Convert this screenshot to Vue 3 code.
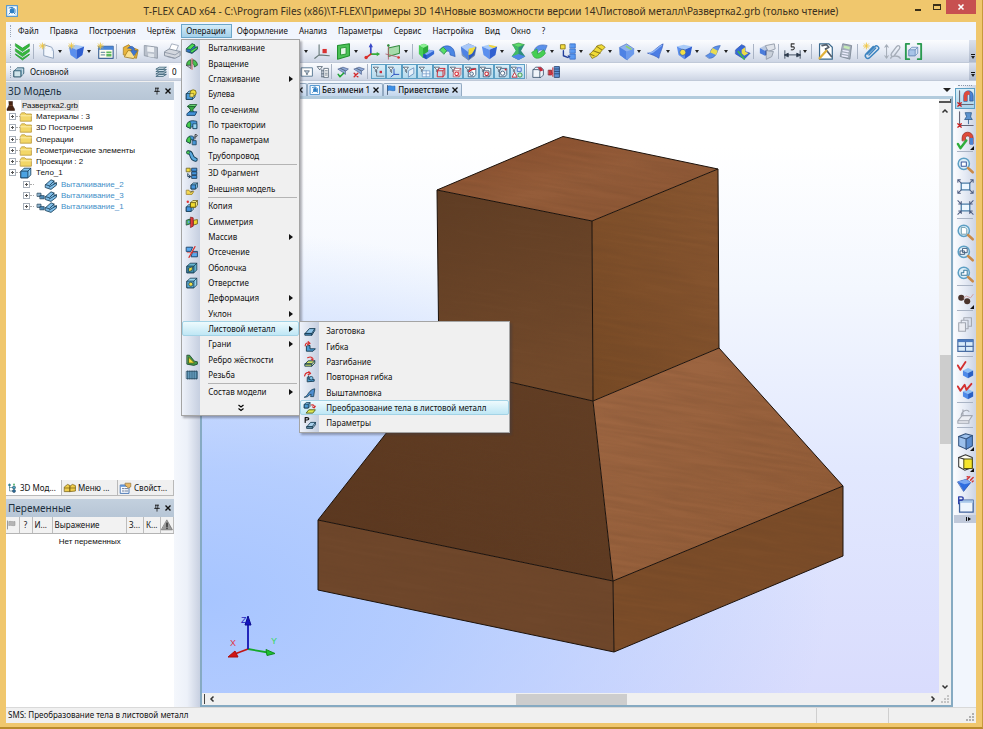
<script setup>
import { ref } from 'vue'

/* ---------- icon drawing helpers (20 x 20 grid) ---------- */
const p = (d, f = 'none', s = 'none', w = 1) =>
  `<path d="${d}" fill="${f}" stroke="${s}" stroke-width="${w}" stroke-linejoin="round" stroke-linecap="round"/>`
const c = (x, y, r, f = 'none', s = 'none', w = 1) =>
  `<circle cx="${x}" cy="${y}" r="${r}" fill="${f}" stroke="${s}" stroke-width="${w}"/>`
const cube = (x, y, s, top, left, right, line = 'none', w = 1) => {
  const h = s / 2, q = s / 4
  return p(`M${x} ${y + q}L${x + h} ${y}L${x + s} ${y + q}L${x + h} ${y + h}Z`, top, line, w) +
    p(`M${x} ${y + q}L${x + h} ${y + h}V${y + s}L${x} ${y + s - q}Z`, left, line, w) +
    p(`M${x + s} ${y + q}L${x + h} ${y + h}V${y + s}L${x + s} ${y + s - q}Z`, right, line, w)
}
const box = (x, y, s, f, f2, line = '#12384f', w = 1.3) =>
  p(`M${x} ${y + s * 0.3}L${x + s * 0.3} ${y}H${x + s}V${y + s * 0.7}L${x + s * 0.7} ${y + s}H${x}Z`, f2, line, w) +
  p(`M${x} ${y + s * 0.3}H${x + s * 0.7}V${y + s}H${x}Z`, f, line, w) +
  p(`M${x + s * 0.7} ${y + s * 0.3}L${x + s} ${y}`, 'none', line, w)
const funnel = p('M1 2h8l-3 4v5l-2-2V6z', '#fff', '#3a4a5c', 1.2)
const spark = p('M4 0v7M0.5 3.5h7M1.5 1l5 5M6.5 1l-5 5', 'none', '#f0c43a', 1)
const lens = c(8, 8, 6.6, '#dceffa', '#5d9fc4', 1.8) + p('M13 13l5.5 5', 'none', '#c98a4a', 3)
const bcube = p('M1 4l8-2 10 2-9 4z', '#a9cbf8') + p('M1 4l9 4v11l-7-5z', '#5b8fee') + p('M19 4l-9 4v11l7-5z', '#2f5fd0')

const icons = {
  app: p('M1 1h18v18H1z', '#f6fbff', '#5a9bd0', 2) + c(10, 10, 4, '#2f7fc4') + p('M10 4v6l-5 5M10 10l5 5M5 5l5-1 5 3v6', 'none', '#2f7fc4', 1.6),
  chev: p('M2 1l8 5 8-5v3l-8 6-8-6zM2 7l8 5 8-5v3l-8 6-8-6zM2 13l8 5 8-5v1l-8 6-8-6z', '#35b83c', '#1f9a2c', .8),
  newdoc: p('M6 2l9 3 2 4v9L6 15z', '#f3f7fd', '#8397b4', 1) + p('M15 5v4h2z', '#b9c9e0') + spark,
  cube: bcube + spark,
  win: p('M2 4h17v14H2z', '#fffdf0', '#44699b', 1.4) + p('M2 4h17v4H2z', '#4a86d8') + p('M5 11h4M5 14h4', 'none', '#79a', 1.5) + p('M11 10h6v2h-6zM11 13h6v3h-6z', '#5cb85c') + spark,
  open: p('M2 5l6-3 3 3 8 3-2 10L2 14z', '#e9b43a', '#a9801f') + p('M3 16l4-7h11l-4 9z', '#fbe08c', '#a9801f') + p('M7 6c3-4 8-2 8 3h3l-4 6-4-6h2c0-2-2-3-5-3z', '#3f76d0', '#2a55a6', .6),
  save: p('M2 3l15 2v13L2 15z', '#b9c0cb', '#8a93a1') + p('M5 4l8 1v6l-8-1z', '#eef1f5') + p('M6 12l7 1v4l-7-1z', '#dfe4ea'),
  print: p('M6 8l3-7 8 2-3 7z', '#fff', '#98a3b3') + p('M1 10l5-3 13 3v5l-6 3-12-3z', '#d3d7de', '#808a98') + p('M1 11l12 3 6-4M4 16l8 2', 'none', '#8f97a7'),
  axR: p('M6 2v12M6 14l12 1M6 14l-5 4', 'none', '#677', 1.3) + p('M10 7h5v5h-5z', '#d93131'),
  plate: p('M3 3l14-2v14L3 19z', '#4cc257', '#1f8f2c', 1.2) + p('M7 6l6-1v8l-6 1z', '#e4f5e6', '#1f8f2c', 1),
  axes: p('M8 13V3', 'none', '#3949c8', 2) + p('M8 0l2.5 5h-5z', '#3949c8') + p('M8 13h8', 'none', '#33ad3d', 2) + p('M19 13l-4-2.5v5z', '#33ad3d') + p('M8 13l-5 4', 'none', '#d9302c', 2) + c(2.5, 17, 2, '#d9302c'),
  plane: p('M4 6l13-3v9L4 16z', '#a7dbab', '#358c41', 1.2) + p('M4 2v17M1 13l16 4', 'none', '#b0606a', 1) + c(16, 17, 1.5, '#d33') + c(4, 3, 1.5, '#2a9136'),
  ext: p('M7 12l6-4 6 1v4l-9 6-4-2z', '#3268d4') + p('M6 12l7-4 6 1-9 5z', '#86aef5') + p('M1 3l6-2 5 2v7l-6 4z', '#2aa83a') + p('M1 3l6-2 5 2-6 3z', '#8cf094') + p('M1 3l5 3v12l-5-5z', '#49cf56') + p('M6 13l4 1v5l-4-2z', '#2453b8'),
  bend: p('M1 8C5 1 16 2 18 10l1 6-6-2C13 9 10 8 6 12z', '#4a86e4', '#2f5fb8', .8) + p('M1 8l4-3 4 4-3 4z', '#58de65', '#1f9a2c', .8),
  round: p('M2 5l8-4 9 4-2 10-7 5-7-5z', '#f2dd3e', '#4a6fc0', .8) + p('M1 4l9 4v12l-7-6z', '#4f83e4') + p('M1 4l9-3 9 3-5 2C10 6 9 8 10 11z', '#a9c8f8') + p('M19 4l-2 10-7 6v-6c5 0 6-5 9-10z', '#2d59c0'),
  cubeY: bcube + p('M9 2l10 2-5 2-4-2z', '#f4d93a'),
  loft: p('M3 2l7-2 7 2-7 3z', '#5fdc6c', '#1f8a2d', .7) + p('M3 2l7 3 7-3-4 7 5 7-8 4-8-4 5-7z', '#2d8d7c') + p('M3 2l4 7-5 7 8 3V5z', '#41bb65') + p('M2 16l8-3 8 3-8 4z', '#4f86e8'),
  rev: p('M4 8C6 3 12 1 19 3l-3 7C12 7 8 8 8 12z', '#5a90ea', '#3a66b8', .7) + p('M1 11l6-4 1 6 7-5 2 4c-4 6-11 8-14 4z', '#44cf52', '#2a9a3a', .7),
  array: p('M1 2h5v5H1z', '#f3dc3f', '#877412') + p('M4 9v6l5 2', 'none', '#233f9a', 1.6) + p('M10 18l-1-4 4 2z', '#233f9a') + p('M12 1h6v5h-6zM12 7h6v5h-6zM12 13h6v6h-6z', '#5a9af2', '#2a62c0', .8),
  copy: p('M1 13l5-5 4-5 5-1 4 3-4 4-5 6-6 3z', '#f0db36', '#8c7a1c') + p('M5 9l8 3M9 4l6 4M1 13l5 2', 'none', '#8c7a1c', 1.2),
  cham: p('M2 5l8-4 9 6-6 4-2 9-8-6z', '#8fb2ee', '#4a72c2', .7) + p('M2 5l8 5v10l-8-6z', '#4d82e4') + p('M10 10l9-3v6l-8 7z', '#6b9aec') + p('M10 4l5 3', 'none', '#8ed06f', 2),
  wing: p('M1 12C8 12 9 6 19 1c-1 7-4 10-5 17-4-3-8-4-13-6z', '#4c7de4', '#3358b6', .7) + p('M3 12c7-1 8-6 14-9', 'none', '#8fb4f5', 1.4),
  hole: bcube + c(8, 11, 3.6, '#f3df45', '#3a61b0', 1),
  sheet: p('M1 15l5-3c1-6 4-8 12-9l-3 6c-2 6-5 9-10 9z', '#5b90e8', '#3a65b6', .7) + p('M6 11l7 3 2-5-6-3z', '#e9dc52'),
  shell: p('M2 8l7-6 4 2v6l6 2-7 7-10-6z', '#3768d6', '#2a50ab', .8) + p('M9 8l4-3v5l4 2-5 3-3-3z', '#ecdc48') + p('M5 10l4 5 3 4', 'none', '#3dbb4a', 1.8),
  multi: cube(1, 3, 12, '#b8c7df', '#4a7cdb', '#2d57b8') + p('M8 3l10-2 1 6-8 3z', '#dfe3ea', '#8d96a4') + p('M9 9l8 1-2 6-6 3z', '#c9d0da', '#8d96a4'),
  dim: p('M1 9v9M19 9v9M1 14h18M1 14l4-2v4zM19 14l-4-2v4z', '#2c3a4c', '#2c3a4c', 1) + p('M12 1H8.500V4.500h2.500c2 .5 1.500 4-2.500 3.500', 'none', '#333', 1.3),
  tools: p('M3 1h11l4 4v14H3z', '#fff', '#39688c', 1.4) + p('M6 3l5-1 3 3-4 2M10 7l7 9', 'none', '#55606d', 2) + p('M3 18l8-9', 'none', '#e0b13b', 2.6),
  calc: p('M6 1l10 2-2 16L3 16z', '#a3adbb', '#7b8593') + p('M7 3l7 1.500-.5 3-7-1.500z', '#c5eab6') + p('M6 9l6 1M5.500 12l6 1M5 15l6 1', 'none', '#eef', 1.6),
  clip: p('M5 13l9-9c2-2 6 1 4 3.500L8 17c-3 3-7-1-4.500-4L12 4M7 14l8-8', 'none', '#3d84c0', 1.7) + spark,
  clip2: p('M3 3v14M1 5l2-3 2 3M1 15l2 3 2-3', 'none', '#a5adb8', 1.2) + p('M9 12l6-8c2-2 5 0 3 3l-6 8c-2 2-5 0-3-3zM8 18c0-3 9-4 11 0', 'none', '#a5adb8', 1.6),
  brak: p('M5 1H1v18h4M15 1h4v18h-4', 'none', '#2a9a50', 2.2) + box(5, 5, 10, '#a8c4e8', '#d6e4f5', '#6d8fbc', 1),

  layer: p('M2 8l5-5h11v9l-5 6H2z', '#7ba9c0', '#2c5468', 1.3) + p('M2 8h11v10H2z', '#cfe3ea', '#2c5468', 1.3) + p('M5 5h11v9', 'none', '#fff', 1),
  levels: p('M2 5l5-3h12l-5 3zM2 9l5-3h12l-5 3zM2 13l5-3h12l-5 3zM2 17l5-3h12l-5 3z', '#dceaf2', '#2d566b', 1.3),
  fbox: p('M1 3h18v14H1z', '#fff', '#5b7a94', 1.6) + p('M6 8h8l-3 4v2h-2v-2z', '#bcd', '#345'),
  ftree: p('M1 1h8L5 6z', '#fff', '#456', 1.3) + p('M8 8h3M8 13h3M8 18h3M8 6v12', 'none', '#456', 1.2) + p('M12 4h7v15h-7zM14 8h3M14 12h3M14 15h3', '#fff', '#456', 1.2),
  fok: p('M2 5l8-3 9 3-5 4v5l-5-4z', '#8fa9d8', '#445a88', 1.1) + p('M2 14l3 4 6-6', 'none', '#1fa433', 2.6) + p('M6 4l8 4', 'none', '#456', 1.3),
  fno: p('M2 5l8-3 9 3-5 4v5l-5-4z', '#8fa9d8', '#445a88', 1.1) + p('M2 12l6 6M8 12l-6 6', 'none', '#d4282a', 2.4) + p('M6 4l8 4', 'none', '#456', 1.3),
  f0: funnel + p('M6 8v9h12', 'none', '#567', 1.2) + p('M11 8h4v4h-4z', '#cc2d3a'),
  f1: funnel + p('M10 5v9h8M10 14l-5 4', 'none', '#2a4fc0', 1.6),
  f2: funnel + p('M9 18V8l9-5v9z', '#e8f1fa', '#5883b5', 1.2),
  f3: funnel + p('M6 8h12v10H6zM12 8v10M6 13h12', '#f4f9ff', '#6d95c4', 1.2),
  f4: funnel + p('M6 8l3-4h9v10l-3 4H6zM6 8h9v10M15 8l3-4', 'none', '#cf2a35', 1.6),
  f5: funnel + p('M6 8l3-4h9v10l-3 4H6zM6 8h9v10M15 8l3-4', '#fff', '#b04b55', 1.2) + c(11, 13, 3, 'none', '#d6222e', 1.8),
  f6: funnel + p('M6 8l3-4h9v10l-3 4H6z', '#fff', '#3b5878', 1.4) + p('M7 9l4-3 6-1', 'none', '#d6222e', 2.4) + c(11, 13, 3, '#e7eef6', '#3b5878', 1.4),
  f7: funnel + p('M6 8l3-4h9v10l-3 4H6zM6 8h9v10', '#fff', '#3b5878', 1.4) + c(11, 13, 3, '#fff', '#c22834', 1.8),
  f8: funnel + p('M6 8l3-4h9v10l-3 4H6z', '#dbe7f2', '#3b5878', 1.4) + c(11, 12, 3.500, '#fff', '#3b5878', 1.4) + c(16, 6, 1.6, '#d6222e'),
  f9: funnel + p('M2 18l4-7 4 7z', '#fff', '#c22834', 1.5) + p('M11 3h6v6h-6z', '#dbe7ff', '#3a62c4', 1.4) + c(15, 15, 3.500, '#d7f3da', '#248b38', 1.4),
  g0: p('M2 6l4-4h9l4 4v9l-4 4H2z', '#f0f4fa', '#3c536e', 1.4) + p('M9 2h6l4 5-5 2z', '#c42a3c') + p('M2 6h9l2 3v10', 'none', '#3c536e', 1.4),
  g1: p('M11 1h8v18h-8zM11 5h8M11 9h8M11 13h8', '#5f94d8', '#23406e', 1.4) + p('M1 7h5v8H1z', '#cf3742', '#7c1a22', 1.2) + p('M8 3v14M8 11l-3 3', 'none', '#cf3742', 1.8),

  folder: p('M1 5l2-2h5l2 2h9v12H1z', '#f3d768', '#b08c28', 1.2) + p('M1 8h18', 'none', '#fff3b8', 1.3),
  body: box(2, 2, 16, '#4ba3e2', '#86c8f2', '#173e5c', 1.4),
  mext: p('M1 11l9-8 5 2v4l4-1v4l-9 7-9-3z', '#2f6fc0', '#123d56', 1.3) + p('M1 11l9-8 5 2-7 7zM7 15l12-7v3l-9 7z', '#4fdc55', '#146224', 1),
  text: p('M1 11l9-8 5 2v4l4-1v4l-9 7-9-3z', '#7fbde8', '#183e58', 1.4) + p('M8 12l7-7M7 15l12-7M1 11l6 2', 'none', '#183e58', 1.4),
  link: p('M1 3h9v8H1z', '#8db4d0', '#1d3f58', 1.8) + p('M8 9h10v8H8z', '#4f8cb8', '#1d3f58', 1.8),
  mrev: p('M1 12c0-6 3-8 7-9v9zM12 3c4 1 7 4 7 9l-5 3c0-3-1-4-2-5z', '#49c24e', '#23502c', 1.3) + p('M10 1v18', 'none', '#cf3a3a', 1.4) + p('M1 12h7v5z', '#b7c5cf', '#333', 1),
  mbool: box(1, 5, 14, '#4b9ad8', '#86c8f2') + c(12, 8, 5, '#f2dd3a', '#6d5f10', 1.3) + p('M7 9h6v6H7z', '#f2e36a', '#6d5f10', 1),
  mloft: p('M3 4l3-3h12l-3 4z', '#6fe27a', '#14532a', 1.4) + p('M3 4l5 6-5 6h12l-4-6 4-5z', '#34a843', '#14532a', 1.4) + p('M2 16l3-3h13l-3 6H2z', '#4392d8', '#123d66', 1.4),
  mtraj: p('M1 12C2 4 8 1 18 4v12h-6c0-5-3-5-4-1z', '#4795d6', '#123d56', 1.4) + p('M1 12c0-4 2-7 5-8l2 4-1 7z', '#47ce4e', '#14532a', 1.2) + p('M12 8h6v8h-6z', '#9bd6f2', '#123d56', 1.2),
  mpar: p('M1 12C2 4 8 1 13 5v5h-3c0-3-2-1-3 5z', '#4795d6', '#123d56', 1.4) + p('M1 12c0-4 2-7 5-8l2 4-1 7z', '#47ce4e', '#14532a', 1.2) + p('M11 11h6v7h-6z', '#4795d6', '#123d56', 1.3) + p('M15 8V1h2c3 1 2 4-2 4', 'none', '#111', 1.2),
  mpipe: p('M4 4c8 0 2 10 12 12', 'none', '#123d56', 7) + p('M4 4c8 0 2 10 12 12', 'none', '#5aa9de', 4) + c(3.500, 4, 2.5, '#4fd457', '#14532a', 1),
  mfrag: p('M1 2h6v6H1z', '#f3dc3f', '#5e5210', 1.2) + p('M10 2h8v5h-8zM10 8h8v5h-8zM10 14h8v5h-8z', '#4595de', '#10304d', 1.3) + p('M3 11v5h4M5 13l3 3-3 2', 'none', '#10304d', 1.5),
  mextm: box(9, 0, 10, '#4595de', '#8fd0f5') + p('M1 12h4l1 2h7l-3 5H1z', '#f5d850', '#94781a', 1.2) + p('M11 13l-3 3', 'none', '#235', 1.2),
  mcopy: box(1, 8, 11, '#4595de', '#8fd0f5') + box(8, 1, 11, '#f0da2e', '#fbf08a', '#5e5210') + c(3, 3, 2, '#d33'),
  msym: p('M1 7l6-2v8l-6 2z', '#47b84e', '#123d36', 1.3) + p('M13 7l6-1v7l-6 2z', '#f0da2e', '#5e5210', 1.3) + p('M8 2l4 1v14l-4 2z', '#e23b3b', '#7d1616', 1.2) + p('M3 8h3v4H3z', '#5aa9de'),
  mcut: p('M1 2h10L8 9H1zM12 9h7v9H9z', '#5aa9ee', '#123d66', 1.5) + p('M15 1L5 19', 'none', '#d8322e', 2) + p('M2 11h16', 'none', '#d8322e', 1),
  mshell: box(2, 2, 16, '#3f8fae', '#64b5d0') + p('M5 10l6-2-1 6-5 2z', '#e8dc42', '#23404c', 1.2),
  mhole: box(2, 2, 16, '#5aaed8', '#94d4ee') + c(8, 12, 3.4, '#f0e04a', '#23404c', 1.3),
  mrib: p('M2 2h4l8 10 5 1v4l-6 2-11-2z', '#3f9a48', '#163c22', 1.3) + p('M5 6l9 9H5z', '#f0e038', '#5e5210', 1.1),
  mthread: p('M1 4h18v12H1z', '#7fbce0', '#153a52', 1) + p('M3 3v14M6.500 3v14M10 3v14M13.500 3v14M17 3v14', 'none', '#153a52', 1.4),
  s1: p('M2 14L9 6h9l-5 8z', '#8fc3e8', '#12384f', 1.5) + p('M2 14h11v3H2zM13 17l5-8V6', '#4b8fc4', '#12384f', 1.5),
  s2: p('M4 9v8h11l4-4h-9V8z', '#4b9ad0', '#12384f', 1.5) + p('M2 8C2 3 7 2 10 4M10 4L7 1M10 4L6 6', 'none', '#d62f2f', 2),
  s3: p('M2 13l5-5h11l-5 5zM2 13h11v4H2zM13 17l5-5V8', '#cfe06a', '#12384f', 1.4) + p('M6 3c6-3 10 0 9 4l-3-2', 'none', '#d62f2f', 1.8),
  s4: p('M6 10l2-2v6h9v3l-11 1z', '#4b9ad0', '#12384f', 1.5) + c(12, 12, 3, '#7fc0e4', '#12384f', 1.2) + p('M1 8C2 2 8 1 11 4M11 4L8 1M11 4L7 6', 'none', '#d62f2f', 2),
  s5: p('M1 17C7 15 8 4 18 3l-2 13h-5l1-4-3 1c-2 3-4 4-8 4z', '#4f8ed0', '#12384f', 1.3),
  s6: box(1, 1, 9, '#4b9ad0', '#8fd0f5') + p('M4 18l4-5h11l-4 5z', '#dfe94c', '#56600e', 1.5) + p('M12 5c5-1 6 2 5 5M17 10l-3-2M17 10l2-3', 'none', '#d62f2f', 1.7),
  s7: p('M2 9V1h3c4 0 4 4 0 4H2', 'none', '#111', 2) + p('M5 16l6-7h8l-5 7zM5 16h9v3H5zM14 19l5-6V9', '#a9cfea', '#12384f', 1.4),

  r0: p('M3 1v17M3 17h16', 'none', '#667', 1.3) + p('M8 13V7c0-8 11-8 11 0v6h-4V7c0-3-3-3-3 0v6z', '#4a83d4', '#2b4f8c', .8) + p('M8 13V7c0-5 4-7 7-5v4c-2-1-3 0-3 1v6z', '#df4a3a') + p('M1 15l4 4M5 15l-4 4', 'none', '#c22', 1.6),
  r1: p('M3 1v17M3 17h16', 'none', '#667', 1.3) + p('M10 2h7l-1 5 2 3H9l2-3zM13.500 10v5', '#5c93cf', '#33608f', 1) + p('M1 15l4 4M5 15l-4 4', 'none', '#c22', 1.6),
  r2: p('M6 10V7c0-9 13-9 13 0v7h-4V7c0-3-5-3-5 0v3z', '#df4a3a', '#8e2a22', .8) + p('M15 7h4v8h-4z', '#4a83d4') + p('M1 14l3 5 7-9', 'none', '#2fae3b', 2.8),
  r3: lens + p('M5 6h6v5H5z', '#fff', '#3c5a9c', 1.2),
  r4: p('M5 6h10v8H5z', '#eef7ff', '#4a7da8', 1.5) + p('M5 6L1 2M15 6l4-4M5 14l-4 4M15 14l4 4M1 5V2h3M16 2h3v3M1 15v3h3M16 18h3v-3', 'none', '#4c5c80', 1.2),
  r5: p('M5 6h10v8H5z', '#eef7ff', '#4a7da8', 1.5) + p('M5 6L1 2M15 6l4-4M5 14l-4 4M15 14l4 4M2 6h3V3M15 3v3h3M2 14h3v3M15 17v-3h3', 'none', '#4c5c80', 1.2),
  r6: lens + p('M5.500 4h4l2 2v6h-6z', '#fff', '#6a98a8', 1.1),
  r7: lens + p('M4 7h5v4H4zM7 4h5v5H7z', '#fff', '#3c5a7c', 1.1),
  r8: lens + p('M5 8h3V5h4v6H5z', '#fff', '#3c7a9c', 1.2),
  r9: c(5, 8, 3.600, '#4a332c') + c(12, 12, 3.600, '#4a332c') + p('M8 8l3-2 5 2 3-4', 'none', '#c99', 1),
  r10: p('M2 8h8v10H2z', '#eceef3', '#a3a8b2', 1.3) + p('M5 8V5h8v10h-3M8 5V2h9v10h-4', 'none', '#a3a8b2', 1.3),
  r11: p('M1 3h18v14H1z', '#d8ecfa', '#4a6ea4', 1.4) + p('M1 3h18v3H1z', '#4a7bc0') + p('M10 6v11M1 11h18', 'none', '#4a6ea4', 1.3),
  r12: cube(7, 7, 12, '#8fc0f5', '#4f8ae8', '#2a60c4') + p('M1 4l3 5L10 0', 'none', '#d33030', 2.2),
  r13: cube(7, 7, 12, '#8fc0f5', '#4f8ae8', '#2a60c4') + p('M1 4l3 5 5-7 2 6 6-7', 'none', '#d33030', 2.2),
  r14: p('M1 15l5-6h12l-4 6zM1 15h13v3H1z', '#eceef3', '#a3a8b2', 1.3) + p('M5 9c0-5 6-8 9-5M7 2v7', 'none', '#a3a8b2', 1.3),
  r15: p('M2 4l8-3 8 2v12l-7 4-9-4z', '#9cc0ec', '#32517c', 1.2) + p('M2 4l9 3 7-4M11 7v12', 'none', '#32517c', 1.2) + p('M11 7l7-4v12l-7 4z', '#5b8dd0', '#32517c', 1),
  r16: p('M2 4l8-3 8 3v12l-9 3-7-4z', '#fdfcf0', '#333', 1.2) + p('M8 6h10v11H8z', '#f6e52a', '#55500e', 1.2) + p('M2 4l6 2', 'none', '#333', 1.2),
  r17: p('M1 8l10-3 5 4-8 10z', '#2f6de0', '#1d4aa8', .8) + p('M1 8l10-3 5 4-7 2z', '#7ba8f2') + p('M12 5l3-3M16 6l3-3M12 2l1 0M18 8l1-1', 'none', '#d23b3b', 1.8),
  r18: p('M3 5h16v14H3z', '#eef5fd', '#40629c', 1.5) + p('M3 5h16v3H3z', '#a9c8ea') + p('M2 9V1h3c3 0 3 4 0 4H2', 'none', '#2d3fa8', 1.6),

  t0: p('M3 2v14h8M3 9h8', 'none', '#367', 1.2) + c(3, 4, 2.500, '#2e7f93') + c(12, 9, 3, '#4aa7c8', '#134', 1) + c(12, 16, 3, '#2e6fa3', '#134', 1) + c(12, 3, 2, '#58b56e'),
  t1: p('M1 8l5-4 4 2v10H1zM10 7l4-3 5 2v9l-9 1z', '#f0cd4a', '#7d6414', 1.3) + p('M1 10h18', 'none', '#7d6414', 1.3),
  t2: p('M1 5h14v14H1z', '#f6faff', '#3f6fb0', 1.5) + p('M1 5h14v3H1z', '#5d93d8') + p('M4 11h3M4 15h3M9 11h4M9 15h4', 'none', '#568', 1.4) + p('M9 2h9v6l-4 2-5-4z', '#e7b765', '#8c6424', 1),
  flag: p('M3 1v18', 'none', '#5b6b80', 2) + p('M4 2c5-2 8 2 14 0v9c-6 2-9-2-14 0z', '#3d8fe6', '#1c5ca8', 1),
  gflag: p('M3 2v16', 'none', '#9a9a9a', 2) + p('M6 3c4-1 7 1 12 0v8c-5 1-8-1-12 0z', '#b5b5b5', '#8c8c8c', 1),
  warn: p('M10 2l9 16H1z', '#9a9a9a', '#6c6c6c', 1.2) + p('M10 7v6M10 15.500v.5', 'none', '#222', 2.2),
  pin: p('M6 3h8M7 3v8M12 3v8M4 11h12M10 11v7', 'none', '#111', 2),
  kettle: p('M6 1h7v8l4 7v3H2v-3l4-7z', '#4a2513', '#2a1208', 1) + p('M6 9h7', 'none', '#7d4a2c', 1.4),
}

/* ---------- menus ---------- */
const openMenu = ref('Операции')
const toggle = (name) => { openMenu.value = openMenu.value === name ? '' : name }
const menuBar = ['Файл', 'Правка', 'Построения', 'Чертёж', 'Операции', 'Оформление', 'Анализ', 'Параметры', 'Сервис', 'Настройка', 'Вид', 'Окно', '?']
const sheetMenu = [
  { t: 'Заготовка', i: 's1' }, { t: 'Гибка', i: 's2' }, { t: 'Разгибание', i: 's3' }, { t: 'Повторная гибка', i: 's4' },
  { t: 'Выштамповка', i: 's5' }, { t: 'Преобразование тела в листовой металл', i: 's6', on: true }, { t: 'Параметры', i: 's7' },
]
const opsMenu = [
  [{ t: 'Выталкивание', i: 'mext' }, { t: 'Вращение', i: 'mrev' }, { t: 'Сглаживание', sub: true }, { t: 'Булева', i: 'mbool' },
    { t: 'По сечениям', i: 'mloft' }, { t: 'По траектории', i: 'mtraj' }, { t: 'По параметрам', i: 'mpar' }, { t: 'Трубопровод', i: 'mpipe' }],
  [{ t: '3D Фрагмент', i: 'mfrag' }, { t: 'Внешняя модель', i: 'mextm' }],
  [{ t: 'Копия', i: 'mcopy' }, { t: 'Симметрия', i: 'msym' }, { t: 'Массив', sub: true }, { t: 'Отсечение', i: 'mcut' },
    { t: 'Оболочка', i: 'mshell' }, { t: 'Отверстие', i: 'mhole' }, { t: 'Деформация', sub: true }, { t: 'Уклон', sub: true },
    { t: 'Листовой металл', sub: true, on: true, items: sheetMenu }, { t: 'Грани', sub: true },
    { t: 'Ребро жёсткости', i: 'mrib' }, { t: 'Резьба', i: 'mthread' }],
  [{ t: 'Состав модели', sub: true }],
]

/* ---------- toolbars: '|' is a separator, 'v' a drop-down arrow ---------- */
const mainBar = ('chev | newdoc v cube v win | open save print | axR plate axes plane | ext v v axR plate v axes plane v | ' +
  'ext bend round cubeY v loft rev v array v copy v cham v wing v hole v sheet v shell | multi | dim v | tools calc | clip clip2 brak').split(' ')
const filterBtns = ['f0', 'f1', 'f2', 'f3', 'f4', 'f5', 'f6', 'f7', 'f8', 'f9']
const sideBar = 'r0 r1 r2 | r3 r4 r5 | r6 r7 r8 | r9 | r10 r11 | r12 r13 | r14 | r15 r16 r17 r18'.split(' ')
const sideCorner = ['r2', 'r9', 'r15', 'r16']

const tree = [
  { t: 'Материалы : 3', i: 'folder' }, { t: '3D Построения', i: 'folder' }, { t: 'Операции', i: 'folder' },
  { t: 'Геометрические элементы', i: 'folder' }, { t: 'Проекции : 2', i: 'folder' }, { t: 'Тело_1', i: 'body' },
  { t: 'Выталкивание_2', i: 'text', deep: true }, { t: 'Выталкивание_3', i: 'text', deep: true, link: true },
  { t: 'Выталкивание_1', i: 'text', deep: true, link: true },
]
</script>

<template>
  <div class="window">
    <header class="title">
      <svg class="ic i12" viewBox="0 0 20 20" v-html="icons.app"></svg>
      <h1>T-FLEX CAD x64 - C:\Program Files (x86)\T-FLEX\Примеры 3D 14\Новые возможности версии 14\Листовой металл\Развертка2.grb (только чтение)</h1>
      <div class="winbtns">
        <button class="wb" aria-label="Свернуть"><i class="mini"></i></button>
        <button class="wb" aria-label="Развернуть"><i class="maxi"></i></button>
        <button class="wb close" aria-label="Закрыть"><svg class="ic i8" viewBox="0 0 8 8"><path d="M1.500 1.500l5 5M6.500 1.500l-5 5" stroke="#fff" stroke-width="1.6" /></svg></button>
      </div>
    </header>

    <div class="client">
      <nav class="menubar">
        <i class="grip"></i>
        <div v-for="m in menuBar" :key="m" class="mb">
          <button class="mbtn" :class="{ open: openMenu === m }" @click="toggle(m)">{{ m }}</button>
          <div v-if="m === 'Операции' && openMenu === m" class="menu ops">
            <ul v-for="(g, gi) in opsMenu" :key="gi" class="group">
              <li v-for="it in g" :key="it.t" class="item">
                <button class="row" :class="{ on: it.on }">
                  <span class="icol"><svg v-if="it.i" class="ic i12" viewBox="0 0 20 20" v-html="icons[it.i]"></svg></span>
                  <span class="lbl">{{ it.t }}</span>
                  <i v-if="it.sub" class="tri-r"></i>
                </button>
                <div v-if="it.items" class="menu sub">
                  <ul class="group">
                    <li v-for="s in it.items" :key="s.t" class="item">
                      <button class="row" :class="{ on: s.on }">
                        <span class="icol"><svg class="ic i12" viewBox="0 0 20 20" v-html="icons[s.i]"></svg></span>
                        <span class="lbl">{{ s.t }}</span>
                      </button>
                    </li>
                  </ul>
                </div>
              </li>
            </ul>
            <button class="more" aria-label="Ещё"><svg class="ic i8" viewBox="0 0 8 8"><path d="M1.500 1l2.500 2 2.500-2M1.500 4.500l2.500 2 2.500-2" fill="none" stroke="#000" stroke-width="1.2" /></svg></button>
          </div>
        </div>
      </nav>

      <div class="bar main">
        <i class="grip"></i>
        <template v-for="(b, k) in mainBar" :key="k">
          <i v-if="b === '|'" class="sep"></i>
          <button v-else-if="b === 'v'" class="drop" aria-label="Список"><i class="tri-d"></i></button>
          <button v-else class="tb" :aria-label="'Команда ' + k"><svg class="ic i16" viewBox="0 0 20 20" v-html="icons[b]"></svg></button>
        </template>
        <span class="over"><i class="dash"></i><i class="tri-d"></i></span>
      </div>

      <div class="bar second">
        <i class="grip"></i>
        <button class="layer"><svg class="ic i12" viewBox="0 0 20 20" v-html="icons.layer"></svg><span>Основной</span></button>
        <label class="lvl"><svg class="ic i12" viewBox="0 0 20 20" v-html="icons.levels"></svg><input type="text" value="0" aria-label="Уровень" /></label>
        <button class="fb" aria-label="Список фильтров"><svg class="ic i12" viewBox="0 0 20 20" v-html="icons.fbox"></svg></button>
        <button class="fb" aria-label="Дерево"><svg class="ic i12" viewBox="0 0 20 20" v-html="icons.ftree"></svg></button>
        <i class="sep"></i>
        <button class="fb" aria-label="Включить все"><svg class="ic i12" viewBox="0 0 20 20" v-html="icons.fok"></svg></button>
        <button class="fb" aria-label="Выключить все"><svg class="ic i12" viewBox="0 0 20 20" v-html="icons.fno"></svg></button>
        <i class="sep"></i>
        <div class="filters">
          <button v-for="f in filterBtns" :key="f" :aria-label="'Фильтр ' + f"><svg class="ic i12" viewBox="0 0 20 20" v-html="icons[f]"></svg></button>
        </div>
        <i class="sep"></i>
        <button class="fb" aria-label="Выбор грани"><svg class="ic i12" viewBox="0 0 20 20" v-html="icons.g0"></svg></button>
        <button class="fb" aria-label="Выбор операции"><svg class="ic i12" viewBox="0 0 20 20" v-html="icons.g1"></svg></button>
        <span class="over"><i class="dash"></i><i class="tri-d"></i></span>
      </div>

      <div class="work">
        <aside class="left">
          <section class="panel model">
            <header class="ph"><h2>3D Модель</h2>
              <button aria-label="Закрепить"><svg class="ic i8" viewBox="0 0 20 20" v-html="icons.pin"></svg></button>
              <button aria-label="Закрыть"><svg class="ic i8" viewBox="0 0 8 8"><path d="M1.500 1.500l5 5M6.500 1.500l-5 5" stroke="#111" stroke-width="1.4" /></svg></button>
            </header>
            <ul class="tree">
              <li class="root"><svg class="ic i10" viewBox="0 0 20 20" v-html="icons.kettle"></svg><span>Развертка2.grb</span></li>
              <li v-for="n in tree" :key="n.t" :class="{ deep: n.deep }">
                <button class="plus" aria-label="Раскрыть"></button><i class="dots"></i>
                <span v-if="n.deep" class="lk"><svg v-if="n.link" class="ic i8" viewBox="0 0 20 20" v-html="icons.link"></svg></span>
                <svg class="ic i12" viewBox="0 0 20 20" v-html="icons[n.i]"></svg><span class="nt">{{ n.t }}</span>
              </li>
            </ul>
            <div class="ptabs">
              <button class="act"><svg class="ic i10" viewBox="0 0 20 20" v-html="icons.t0"></svg>3D Мод...</button>
              <button><svg class="ic i12" viewBox="0 0 20 20" v-html="icons.t1"></svg>Меню ...</button>
              <button><svg class="ic i12" viewBox="0 0 20 20" v-html="icons.t2"></svg>Свойст...</button>
            </div>
          </section>
          <section class="panel vars">
            <header class="ph"><h2>Переменные</h2>
              <button aria-label="Закрепить"><svg class="ic i8" viewBox="0 0 20 20" v-html="icons.pin"></svg></button>
              <button aria-label="Закрыть"><svg class="ic i8" viewBox="0 0 8 8"><path d="M1.500 1.500l5 5M6.500 1.500l-5 5" stroke="#111" stroke-width="1.4" /></svg></button>
            </header>
            <table>
              <thead>
                <tr>
                  <th class="w12"><svg class="ic i10" viewBox="0 0 20 20" v-html="icons.gflag"></svg></th>
                  <th class="w13">?</th><th class="w20">И...</th><th class="wide">Выражение</th><th class="w16">З...</th><th class="w16">К...</th>
                  <th class="w12"><svg class="ic i12" viewBox="0 0 20 20" v-html="icons.warn"></svg></th>
                </tr>
              </thead>
              <tbody><tr><td colspan="7">Нет переменных</td></tr></tbody>
            </table>
          </section>
        </aside>

        <div class="gutter"></div>

        <main class="doc">
          <div class="dtabs">
            <button class="dt first" aria-label="Развертка2"><svg class="ic i8" viewBox="0 0 8 8"><path d="M1.500 1.500l5 5M6.500 1.500l-5 5" stroke="#111" stroke-width="1.3" /></svg></button>
            <div class="dt"><svg class="ic i10" viewBox="0 0 20 20" v-html="icons.app"></svg><span>Без имени 1</span><button aria-label="Закрыть вкладку"><svg class="ic i8" viewBox="0 0 8 8"><path d="M1.500 1.500l5 5M6.500 1.500l-5 5" stroke="#111" stroke-width="1.3" /></svg></button></div>
            <div class="dt"><svg class="ic i10" viewBox="0 0 20 20" v-html="icons.flag"></svg><span>Приветствие</span><button aria-label="Закрыть вкладку"><svg class="ic i8" viewBox="0 0 8 8"><path d="M1.500 1.500l5 5M6.500 1.500l-5 5" stroke="#111" stroke-width="1.3" /></svg></button></div>
            <button class="all" aria-label="Список вкладок"><i class="tri-d big"></i></button>
          </div>
          <div class="frame">
            <div class="canvas">
              <svg class="scene" viewBox="203 99 735 594" preserveAspectRatio="xMidYMid meet">
                <defs>
                  <linearGradient id="gTop" x1="0" y1="0" x2="1" y2="1"><stop offset="0" stop-color="#884d2c" /><stop offset="0.5" stop-color="#955d3a" /><stop offset="1" stop-color="#8a5533" /></linearGradient>
                  <linearGradient id="gL" x1="0" y1="0" x2="0.3" y2="1"><stop offset="0" stop-color="#5f3d24" /><stop offset="1" stop-color="#734a2b" /></linearGradient>
                  <linearGradient id="gR" x1="0" y1="1" x2="1" y2="0"><stop offset="0" stop-color="#774a25" /><stop offset="1" stop-color="#8a5731" /></linearGradient>
                  <linearGradient id="gSL" x1="0" y1="1" x2="1" y2="0"><stop offset="0" stop-color="#5a371f" /><stop offset="1" stop-color="#633f25" /></linearGradient>
                  <linearGradient id="gSR" x1="0" y1="0" x2="1" y2="1"><stop offset="0" stop-color="#a06844" /><stop offset="1" stop-color="#8f5a35" /></linearGradient>
                  <filter id="grain" x="0" y="0" width="1" height="1"><feTurbulence type="fractalNoise" baseFrequency="0.015 0.25" numOctaves="3" seed="4" /><feColorMatrix values="0 0 0 0 0.12  0 0 0 0 0.05  0 0 0 0 0.02  1.6 0 0 0 -0.5" /></filter>
                  <clipPath id="sil"><path d="M563 136.500L718 169L719 348L843 486V556L614 652L318 590V520L439 366L437 190Z" /></clipPath>
                </defs>
                <g>
                  <path d="M563 136.500L718 169L592 221L437 190Z" fill="url(#gTop)" />
                  <path d="M437 190L592 221L593 401L439 366Z" fill="url(#gL)" />
                  <path d="M718 169L719 348L593 401L592 221Z" fill="url(#gR)" />
                  <path d="M439 366L593 401L613 581L318 520Z" fill="url(#gSL)" />
                  <path d="M719 348L843 486L613 581L593 401Z" fill="url(#gSR)" />
                  <path d="M318 520L613 581L614 652L318 590Z" fill="#6f472b" />
                  <path d="M843 486V556L614 652L613 581Z" fill="#7c4d29" />
                </g>
                <g clip-path="url(#sil)"><rect x="200" y="60" width="760" height="680" filter="url(#grain)" opacity="0.2" transform="rotate(9 580 400)" /></g>
                <path d="M563 136.500L718 169L592 221L437 190ZM437 190L439 366L593 401L719 348L718 169M592 221L593 401L613 581L614 652L318 590V520L439 366M318 520L613 581L843 486V556L614 652M843 486L719 348" fill="none" stroke="#1c120b" stroke-linejoin="round" />
                <g stroke-width="1.800">
                  <path d="M248 649L232 655" stroke="#c01515" /><path d="M228 657l7-6 3 6z" fill="#d11414" stroke="#a80f0f" stroke-width="1" />
                  <path d="M248 649L268 652.500" stroke="#15a92a" /><path d="M275 653.500l-9-4 1 6z" fill="#1cc432" stroke="#128a22" stroke-width="1" />
                  <path d="M248 649V622" stroke="#1414b4" /><path d="M248 616l3 9h-6z" fill="#1414c0" stroke="#0d0d90" stroke-width="1" />
                </g>
                <g class="axl"><text x="230" y="646" fill="#e0364a">X</text><text x="271" y="644" fill="#36d860">Y</text><text x="241" y="623" fill="#2424c0">Z</text></g>
              </svg>
            </div>
            <div class="vs">
              <i class="split"></i>
              <svg class="ic i8" viewBox="0 0 8 8"><path d="M1.500 5.500L4 3l2.500 2.500" fill="none" stroke="#333" stroke-width="1.500" /></svg>
              <i class="s1"></i><i class="thumb"></i><i class="s2"></i>
              <svg class="ic i8" viewBox="0 0 8 8"><path d="M1.500 2.500L4 5l2.500-2.500" fill="none" stroke="#333" stroke-width="1.500" /></svg>
            </div>
            <div class="hs">
              <i class="split"></i>
              <svg class="ic i8" viewBox="0 0 8 8"><path d="M5.500 1.500L3 4l2.500 2.500" fill="none" stroke="#333" stroke-width="1.500" /></svg>
              <i class="s1"></i><i class="thumb"></i><i class="s2"></i>
              <svg class="ic i8" viewBox="0 0 8 8"><path d="M2.500 1.500L5 4L2.500 6.500" fill="none" stroke="#333" stroke-width="1.500" /></svg>
            </div>
            <div class="corner"><svg class="ic i8" viewBox="0 0 8 8"><path d="M6 0h2v2H6zM3 3h2v2H3zM6 3h2v2H6zM0 6h2v2H0zM3 6h2v2H3zM6 6h2v2H6z" fill="#c4c4c4" /></svg></div>
          </div>
        </main>

        <aside class="right">
          <div class="vbar">
            <i class="hgrip"></i>
            <template v-for="(b, k) in sideBar" :key="k">
              <i v-if="b === '|'" class="hsep"></i>
              <button v-else class="sb" :class="{ on: b === 'r0', cor: sideCorner.includes(b) }" :aria-label="'Вид ' + k"><svg class="ic i16" viewBox="0 0 20 20" v-html="icons[b]"></svg></button>
            </template>
            <span class="vover"><i class="dash v"></i><i class="tri-r"></i></span>
          </div>
        </aside>
      </div>

      <footer class="status">
        <span class="msg">SMS: Преобразование тела в листовой металл</span>
        <span class="cell a"></span>
        <span class="cell b"><svg class="ic i8" viewBox="0 0 8 8"><path d="M6 0h2v2H6zM3 3h2v2H3zM6 3h2v2H6zM0 6h2v2H0zM3 6h2v2H3zM6 6h2v2H6z" fill="#b0b0b0" /></svg></span>
      </footer>
    </div>
  </div>
</template>

<style>
html, body { margin: 0; background: #f0c76d; }
</style>

<style scoped>
.window, .window * { box-sizing: border-box; }
.window { min-height: 100vh; display: flex; flex-direction: column; background: #f0c76d; padding: 0 6px 4px; font: 8px/12px "Noto Sans", "Open Sans", sans-serif; color: #111; border-right: 1px solid #c79a3c; border-bottom: 2px solid #b98a2c; }
button { font: inherit; color: inherit; border: 0; background: none; padding: 0; margin: 0; display: flex; align-items: center; white-space: nowrap; }
ul { list-style: none; margin: 0; padding: 0; }
h1, h2 { margin: 0; font-weight: 400; }
i { display: block; flex: none; }
.ic { display: block; flex: none; overflow: visible; }
.i8 { width: 8px; height: 8px; }
.i10 { width: 10px; height: 10px; }
.i12 { width: 12px; height: 12px; }
.i16 { width: 17px; height: 17px; }

.title { height: 22px; display: grid; grid-template-columns: 1fr auto 1fr; align-items: center; }
.title h1 { font-size: 10px; line-height: 22px; color: #3a3020; white-space: nowrap; }
.winbtns { display: flex; align-self: start; justify-self: end; height: 14px; }
.wb { width: 19px; height: 14px; justify-content: center; align-items: center; }
.wb.close { width: 30px; background: #c75050; }
.mini { width: 6px; height: 2px; background: #3a2f18; margin-top: 6px; }
.maxi { width: 8px; height: 6px; border: 1px solid #3a2f18; border-top-width: 2px; }

.client { flex: 1; display: flex; flex-direction: column; background: #f4f7fd; min-height: 0; }
.menubar { height: 18px; display: flex; align-items: center; background: #f1f5fd; }
.grip { width: 3px; height: 12px; border-left: 1px dotted #99a5b8; margin-left: 4px; }
.mb { position: relative; }
.mbtn { height: 14px; padding: 0 5px 0 4px; border: 1px solid transparent; }
.mbtn.open { border-color: #6ba6c8; background: linear-gradient(#d4ecf8, #a3d0ea); }

.menu { position: absolute; z-index: 5; background: linear-gradient(90deg, #eef2fa, #c6cfe0 18px, #f0f0f0 18px); border: 1px solid #a4a4a4; box-shadow: 2px 2px 2px rgba(60, 60, 70, .4); }
.ops { top: 100%; left: 0; width: 119px; margin-top: 1px; }
.sub { left: 100%; top: 0; width: 211px; background: linear-gradient(90deg, #eef2fa, #c6cfe0 19px, #f0f0f0 19px); padding: 1px 0; }
.group + .group { position: relative; padding-top: 2px; }
.group + .group::before { content: ""; display: block; height: 1px; margin: -1px 2px 0 26px; background: #b4b4b4; }
.item { height: 15px; position: relative; }
.item:nth-child(3n + 1) { height: 16px; }
.row { width: 100%; height: 100%; border: 1px solid transparent; border-radius: 2px; }
.row.on { border-color: #a3d3e6; background: linear-gradient(#eefafd, #bfe7f5); }
.icol { width: 17px; display: flex; justify-content: center; }
.ops .lbl { padding-left: 8px; flex: 1; text-align: left; }
.sub .lbl { padding-left: 8px; }
.tri-r { width: 0; height: 0; border: 3px solid transparent; border-left: 4px solid #111; border-right: 0; margin-right: 5px; }
.more { width: 100%; height: 15px; justify-content: center; }
.tri-d { width: 0; height: 0; border: 2px solid transparent; border-top: 3px solid #222; border-bottom: 0; }
.tri-d.big { border-width: 4px 4px 0; }

.bar { position: relative; display: flex; align-items: center; background: linear-gradient(#fbfcfe, #e9eef7 45%, #cdd5e4); border-bottom: 1px solid #c0c9d8; }
.main { height: 23px; }
.main .grip { height: 14px; margin-right: -1px; }
.tb { width: 21px; height: 21px; justify-content: center; flex: none; }
.drop { width: 8px; height: 20px; flex: none; }
.sep { width: 4px; height: 15px; border-left: 1px solid #a9b3c4; flex: none; }
.over { margin-left: auto; width: 7px; align-self: stretch; background: linear-gradient(#dbe1ec, #aeb9cc); display: flex; flex-direction: column; align-items: center; justify-content: flex-end; gap: 1px; padding-bottom: 3px; }
.dash { width: 4px; height: 1px; background: #111; }
.second { height: 18px; }
.layer { width: 142px; gap: 5px; }
.lvl { display: flex; align-items: center; gap: 2px; width: 144px; }
.lvl input { width: 40px; height: 13px; border: 0; padding: 0 3px; background: #fff; font: inherit; }
.fb { width: 16px; height: 16px; justify-content: center; }
.filters { display: grid; grid-template-columns: repeat(10, 1fr); width: 154px; margin-right: 1px; }
.filters button { height: 15px; justify-content: center; border: 1px solid #5c9fc4; background: linear-gradient(#d9eef8, #b4d9ec); }

.work { flex: 1; display: flex; min-height: 0; }
.left { width: 168px; display: flex; flex-direction: column; background: #f0f0f0; }
.panel { display: flex; flex-direction: column; background: #fff; }
.model { flex: 417 1 0; margin-top: 1px; }
.vars { flex: 208 1 0; }
.ph { height: 18px; display: flex; align-items: center; gap: 3px; padding: 0 2px; background: linear-gradient(#c3d0de, #b7c6d6); }
.ph h2 { flex: 1; font-size: 10px; line-height: 16px; color: #20303f; }
.ph button { width: 8px; height: 12px; }
.tree { flex: 1; font: 8px/11px "Liberation Sans", Arial, sans-serif; }
.tree li { height: 11px; display: flex; align-items: center; padding-left: 3px; }
.tree li:nth-child(4n) { height: 12px; }
.tree .root { gap: 5px; padding-left: 0; }
.tree .root span { background: #e4e4e4; padding: 0 1px; }
.tree .deep { padding-left: 17px; color: #3f8fc8; }
.plus { width: 7px; height: 7px; border: 1px solid #a8b0ba; background: linear-gradient(#555, #555) center / 3px 1px no-repeat, linear-gradient(#555, #555) center / 1px 3px no-repeat, #fff; flex: none; }
.dots { width: 4px; border-top: 1px dotted #aaa; }
.lk { width: 11px; display: flex; justify-content: flex-end; }
.nt { padding-left: 4px; }
.ptabs { height: 19px; display: flex; background: #f0f0f0; padding-bottom: 3px; }
.ptabs button { flex: 1; gap: 2px; padding: 0 2px; border: 1px solid #b9b9b9; border-width: 0 1px 1px 0; }
.ptabs .act { background: #fff; }
table { border-collapse: collapse; width: 100%; table-layout: fixed; }
th { height: 16px; padding: 0 0 0 2px; font-weight: 400; text-align: left; background: #f2f2f2; border-right: 1px solid #bdbdbd; border-bottom: 1px solid #b4b4b4; white-space: nowrap; }
.w12 { width: 13px; padding: 0; }
.w13 { width: 13px; text-align: center; padding: 0; }
.w20 { width: 20px; }
.w16 { width: 17px; }
td { text-align: center; font: 8px/16px "Liberation Sans", Arial, sans-serif; padding: 0; }

.gutter { width: 26px; background: linear-gradient(90deg, #f4f7fc, #edf1f9 50%, #c8d0e1); }
.doc { flex: 1; min-width: 0; display: flex; flex-direction: column; }
.dtabs { height: 15px; display: flex; align-items: flex-end; background: #f3f7fd; padding-left: 4px; }
.dt { display: flex; align-items: center; gap: 2px; height: 13px; padding: 0 2px; border: 1px solid #93aac2; border-bottom: 0; border-radius: 2px 2px 0 0; background: linear-gradient(#e6effa, #c3d6ec); font-weight: 500; }
.dt.first { width: 103px; justify-content: flex-end; }
.all { margin-left: auto; width: 10px; height: 12px; }
.frame { flex: 1; min-height: 0; display: grid; grid-template: 1fr 12px / 1fr 12px; border: 2px solid #86aac2; border-top: 3px solid #b2cbdd; background: #f0f0f0; }
.canvas { min-height: 0; min-width: 0; position: relative; background: radial-gradient(85% 62% at 0% 84%, #a7c5ff 0%, rgba(170, 199, 255, .8) 35%, rgba(200, 218, 255, 0) 100%), linear-gradient(#ffffff 8%, #f3f7fe 32%, #e2e8fe 62%, #d9dcfd 100%); }
.scene { position: absolute; inset: 0; width: 100%; height: 100%; }
.axl { font: 9px "Liberation Sans", Arial, sans-serif; }
.vs { display: flex; flex-direction: column; align-items: center; gap: 4px; padding-bottom: 2px; }
.vs .split { align-self: stretch; height: 4px; border: solid #555; border-width: 0 1px 2px 0; }
.hs { display: flex; align-items: center; gap: 3px; padding-right: 2px; }
.hs .split { width: 3px; height: 10px; border-right: 1px solid #444; }
.vs .s1 { flex: 235 0 0; } .vs .s2 { flex: 234 0 0; }
.vs .thumb { flex: 90 0 0; width: 11px; background: #cdcdcd; }
.hs .s1 { flex: 297 0 0; } .hs .s2 { flex: 299 0 0; }
.hs .thumb { flex: 112 0 0; height: 11px; background: #cdcdcd; }
.corner { display: flex; align-items: center; justify-content: center; }

.right { width: 23px; padding: 4px 0 0 1px; background: #f2f6fd; }
.vbar { display: flex; flex-direction: column; align-items: center; background: linear-gradient(90deg, #fbfcfe, #e6ebf5 50%, #ccd4e4); }
.hgrip { width: 14px; height: 3px; border-top: 1px dotted #8b97aa; }
.sb { position: relative; width: 20px; height: 21px; justify-content: center; }
.sb.on { border: 1px solid #5c9fc4; background: linear-gradient(#d9eef8, #a9d2ea); }
.sb.cor::after { content: ""; position: absolute; right: 1px; bottom: 1px; border: 2px solid #111; border-top-color: transparent; border-left-color: transparent; }
.hsep { width: 16px; height: 4px; border-top: 1px solid #a9b3c4; }
.vover { width: 100%; height: 8px; background: #c0c9da; display: flex; align-items: center; justify-content: flex-end; gap: 1px; }
.dash.v { width: 1px; height: 4px; }
.vover .tri-r { border-width: 2px 0 2px 3px; }

.status { height: 16px; display: flex; align-items: stretch; background: #f0f0f0; border-top: 1px solid #d9d9d9; line-height: 14px; }
.msg { flex: 1; padding-left: 2px; }
.cell { border-left: 1px solid #cfcfcf; }
.cell.a { width: 72px; }
.cell.b { width: 88px; display: flex; align-items: flex-end; justify-content: flex-end; padding: 2px; }
</style>
